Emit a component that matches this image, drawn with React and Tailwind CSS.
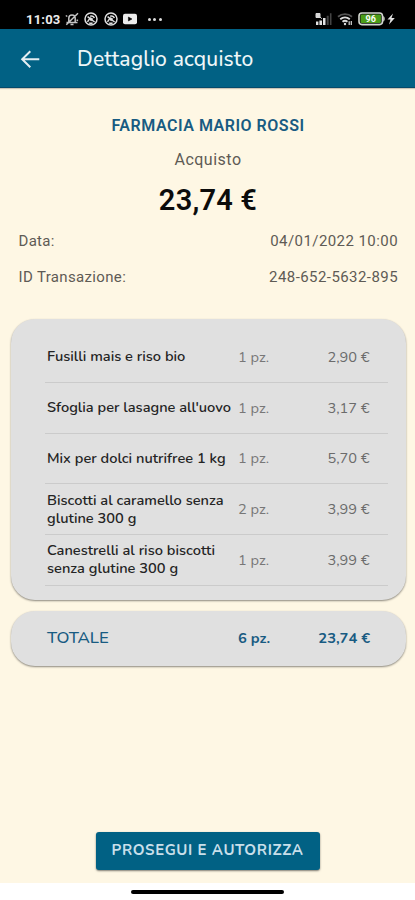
import React from 'react';

const items = [
  { name: ['Fusilli mais e riso bio'], qty: 1, price: '2,90 €' },
  { name: ["Sfoglia per lasagne all'uovo"], qty: 1, price: '3,17 €' },
  { name: ['Mix per dolci nutrifree 1 kg'], qty: 1, price: '5,70 €' },
  { name: ['Biscotti al caramello senza', 'glutine 300 g'], qty: 2, price: '3,99 €' },
  { name: ['Canestrelli al riso biscotti', 'senza glutine 300 g'], qty: 1, price: '3,99 €' },
];

const MutedBell = () => (
  <svg width="14" height="14" viewBox="0 0 14 14" fill="none" stroke="#c4c4c4" strokeWidth="1.5">
    <path d="M1.5 10.5h11M3.8 10.3V6.2a3.2 3.2 0 0 1 6.4 0v4.1M5.5 12.5h3M13 1.2 1.3 12.8M.8 3.5l1.5 1M13 8.6l-1.4-.8" />
  </svg>
);

const Ball = () => (
  <svg width="14" height="14" viewBox="0 0 14 14" fill="none" stroke="#dedede" strokeWidth="1.5">
    <circle cx="7" cy="7" r="6" />
    <path d="M3.6 4.6 10.6 10M3.5 9.8l2-3M6.2 4.3c1.8-.6 3.6.2 4.2 1.8M5.2 10.8c1 .5 2.4.5 3.4 0" />
    <path d="M6 5.6l2.6 1-.6 2.2-2-.6z" fill="#dedede" strokeWidth="0.6" />
  </svg>
);

const Video = () => (
  <svg width="14" height="12" viewBox="0 0 14 12">
    <rect x="0" y="0.7" width="14" height="10.6" rx="2" fill="#ececec" />
    <path d="M5.4 4v4l3.6-2z" fill="#000" stroke="#000" strokeWidth="0.5" />
  </svg>
);

const Signal = () => (
  <svg width="17" height="14" viewBox="0 0 17 14">
    <path d="M1 9.4h2.4V13H1zM4.4 8.4H7V13H4.4zM8 6h2.5v7H8z" fill="#e2e2e2" />
    <path d="M11.7 3.7h2V13h-2zM14.9 1.2h1.6V13h-1.6z" fill="#444" />
    <path d="M1 1.5h4v4H1zM4 4.2l2.8 2.5" fill="#d8d8d8" stroke="#d8d8d8" strokeWidth="1" />
  </svg>
);

const Wifi = () => (
  <svg width="16" height="14" viewBox="0 0 16 14" fill="none" strokeWidth="1.8">
    <path d="M1 4.7c4-3.5 10-3.5 14 0" stroke="#555" />
    <path d="M3.2 7.3c2.8-2.4 6.8-2.4 9.6 0M5.5 9.8c1.5-1.2 3.5-1.2 5 0" stroke="#ddd" />
    <circle cx="8" cy="12" r="1.2" fill="#ddd" />
    <path d="M12.2 13V9.2M14.3 9v4" stroke="#ccc" strokeWidth="1.3" />
  </svg>
);

const Battery = () => (
  <svg width="28" height="14" viewBox="0 0 28 14">
    <rect x="1" y="1" width="23.5" height="11.6" rx="3" fill="#111" stroke="#d4d8d0" strokeWidth="1.6" />
    <rect x="2.6" y="2.6" width="20.3" height="8.4" rx="1" fill="#4a9d17" />
    <path d="M25.2 4c2 .6 2 5 0 5.6z" fill="#d4d8d0" />
    <text x="12.7" y="10" fontSize="9" fontWeight="700" fontFamily="Roboto, sans-serif" textAnchor="middle" fill="#fff">96</text>
  </svg>
);

const StatusBar = () => (
  <div className="flex h-[29px] items-center bg-black pt-[9px] pr-[19px] pl-[26px]">
    <span className="w-[39px] text-[13px] leading-none font-bold tracking-[0.2px] text-[#ececec] whitespace-nowrap">11:03</span>
    <div className="flex items-center gap-[5.4px]">
      <MutedBell />
      <Ball />
      <Ball />
      <Video />
    </div>
    <div className="ml-[10.5px] flex gap-[2.5px]">
      <i className="size-[3px] rounded-full bg-[#dedede]" />
      <i className="size-[3px] rounded-full bg-[#dedede]" />
      <i className="size-[3px] rounded-full bg-[#dedede]" />
    </div>
    <div className="ml-auto flex items-center">
      <Signal />
      <span className="w-[5px]" />
      <Wifi />
      <span className="w-[5px]" />
      <Battery />
      <svg width="10" height="12" viewBox="0 0 9 12">
        <path d="M6.5 0.5 1 6.6h3L2.5 11.5 8.3 5H5z" fill="#e2e2e2" />
      </svg>
    </div>
  </div>
);

const Header = () => (
  <header className="flex h-[59px] items-center border-b border-[#044a6b] bg-[#016184] pt-0.5 pl-[20px] shadow-[0_1px_1px_rgba(0,0,0,0.2)]">
    <svg width="20" height="18" viewBox="0 0 20 18" fill="none" stroke="#e4eef2" strokeWidth="2">
      <path d="M19.3 9.2H2.2M10.3 1.2 2.2 9.2l8.1 8" />
    </svg>
    <h1 className="ml-[37px] font-[Nunito,Lato,sans-serif] text-[21px] leading-none font-medium tracking-[0.2px] whitespace-nowrap text-[#eef6f8]">
      Dettaglio acquisto
    </h1>
  </header>
);

const App = () => {
  return (
    <div className="flex h-[900px] w-[415px] flex-col overflow-hidden bg-[#fef7e4] font-[Roboto,sans-serif]">
      <StatusBar />
      <Header />
      <main className="flex flex-1 flex-col">
        <div className="flex flex-col items-center pt-[28px]">
          <h2 className="h-5 pl-px text-base leading-5 font-semibold tracking-[0.52px] whitespace-nowrap text-[#185b82]">FARMACIA MARIO ROSSI</h2>
          <p className="mt-[14px] h-5 pl-px text-base leading-5 tracking-[0.5px] text-[#5e5b55]">Acquisto</p>
          <p className="mt-[14px] h-8 pl-px text-[29px] leading-8 font-semibold tracking-[0.2px] text-[#0c0c0c]">23,74 €</p>
        </div>
        <div className="mt-[15px] flex flex-col gap-4 pr-[17px] pl-[18.5px] text-[15px] leading-5 text-[#5e5b55]">
          <div className="flex justify-between">
            <span className="tracking-[0.3px]">Data:</span>
            <span className="tracking-[0.43px]">04/01/2022 10:00</span>
          </div>
          <div className="flex justify-between">
            <span className="tracking-[0.35px]">ID Transazione:</span>
            <span className="tracking-[0.43px]">248-652-5632-895</span>
          </div>
        </div>

        <section className="mt-[32px] mr-[9px] ml-[10.5px] h-[281px] rounded-[24px] bg-[#e0e0e0] pt-[13px] pr-[18px] pl-[34.5px] font-[Nunito,Lato,sans-serif] shadow-[0_1px_2px_rgba(0,0,0,0.45)]">
          {items.map((item) => (
            <div key={item.name[0]} className="flex h-[50.75px] items-center border-b border-[#cbcbcb] pr-[18.5px] pl-[2px] text-[14.6px] leading-[18px]">
              <div className="w-[191px] pb-px font-semibold whitespace-nowrap text-[#242424]">
                {item.name.map((line) => (
                  <div key={line}>{line}</div>
                ))}
              </div>
              <span className="text-[#777]">{item.qty} pz.</span>
              <span className="ml-auto text-[#6b6b6b]">{item.price}</span>
            </div>
          ))}
        </section>

        <section className="mt-[11px] mr-[9px] ml-[10.5px] flex h-[55px] items-center rounded-[24px] bg-[#e0e0e0] pr-[36px] pb-px pl-[36.5px] font-[Nunito,Lato,sans-serif] text-[#185b82] shadow-[0_1px_2px_rgba(0,0,0,0.45)]">
          <span className="w-[191px] text-[16.8px] font-medium">TOTALE</span>
          <span className="text-[14.7px] font-bold">6 pz.</span>
          <span className="ml-auto text-[14.7px] font-bold">23,74 €</span>
        </section>

        <button className="mx-auto mt-auto mb-[13px] h-[38px] w-[224px] rounded-[3px] bg-[#016184] pb-0.5 font-[Nunito,Lato,sans-serif] text-[15px] font-bold tracking-[0.6px] whitespace-nowrap text-[#c9dfea] shadow-[0_1px_2px_rgba(0,0,0,0.5)]">
          PROSEGUI E AUTORIZZA
        </button>
      </main>
      <footer className="flex h-[17px] justify-center bg-white pt-[7px]">
        <div className="h-[4px] w-[153px] rounded-full bg-black" />
      </footer>
    </div>
  );
};

export default App;
